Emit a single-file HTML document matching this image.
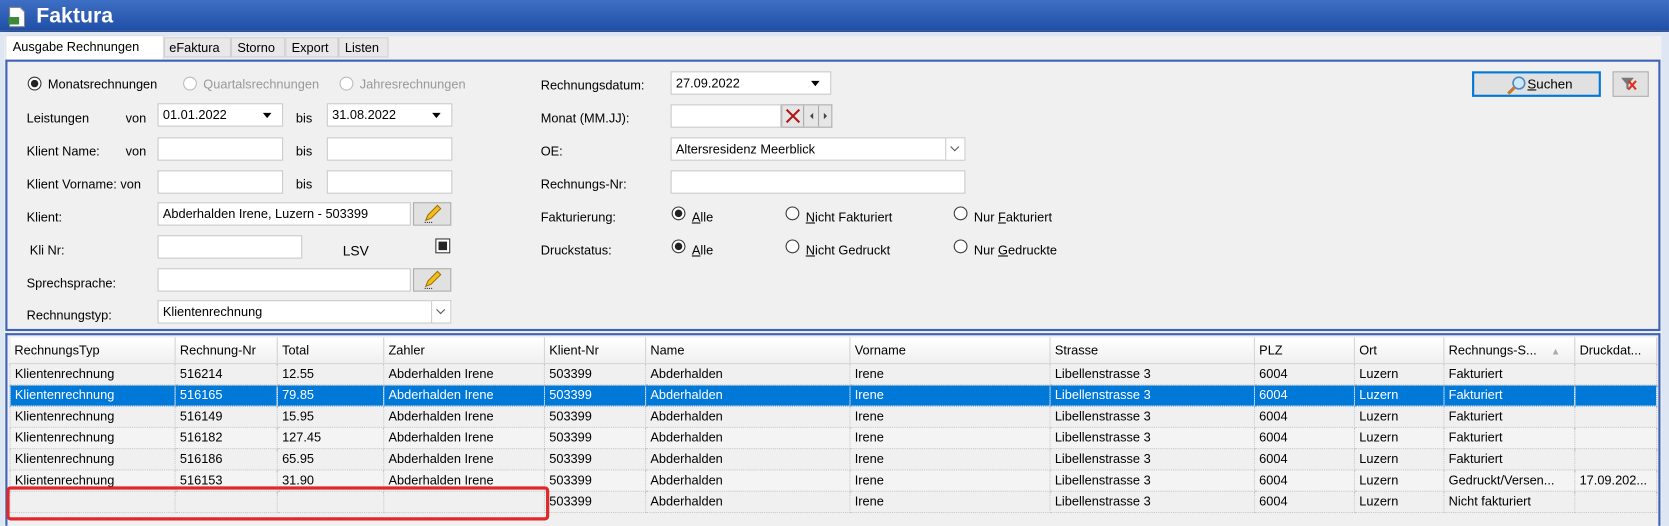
<!DOCTYPE html>
<html><head><meta charset="utf-8"><style>
*{box-sizing:border-box;margin:0;padding:0}
body{width:1669px;height:526px;overflow:hidden;background:#f0f0f0;font:12px "Liberation Sans",sans-serif;color:#000;position:relative}
#w{position:absolute;left:0;top:0;width:1568px;height:494px;transform:scale(1.0644);transform-origin:0 0}
.a{position:absolute;white-space:nowrap}
.tb{position:absolute;background:#fff;border:1px solid #c8c8c8;height:22px;padding:3px 4px;font-size:12px}
.dd::after{content:"";position:absolute;right:10px;top:8px;border-left:4px solid transparent;border-right:4px solid transparent;border-top:5px solid #000}
.rad{position:absolute;width:13px;height:13px;border:1px solid #333;border-radius:50%;background:#fff}
.rad.on::after{content:"";position:absolute;left:2px;top:2px;width:7px;height:7px;border-radius:50%;background:#222}
.rad.dis{border-color:#bbb}
.btn{position:absolute;background:#e1e1e1;border:1px solid #adadad}
.cb{position:absolute;width:18px;height:20px;border-left:1px solid #ccc;background:#fff}
.cb::after{content:"";position:absolute;left:5px;top:5px;width:5px;height:5px;border-right:1px solid #555;border-bottom:1px solid #555;transform:rotate(45deg)}
table{border-collapse:collapse;position:absolute;left:9px;top:317px;table-layout:fixed}
td,th{height:20px;padding:0 4px;font-weight:normal;text-align:left;font-size:12px;overflow:hidden;white-space:nowrap;border:1px dotted #c8c8c8}
th{height:24px;background:linear-gradient(#fff,#f0f0f0);border:none;border-right:1px solid #d5d5d5;border-bottom:1px solid #d5d5d5}
tr.sel td{background:#0078d7;color:#fff;border-color:#5a9ee0}
tr.g td{background:#f4f4f4}
u{text-decoration:underline}
</style></head><body><div id="w">
<div class="a" style="left:0;top:0;width:1568px;height:30px;background:linear-gradient(#3d6fc4,#1f4ea6);border-bottom:1px solid #16397d"></div>
<svg class="a" style="left:7px;top:6px" width="18" height="20"><path d="M2 1h10l4 4v14H2z" fill="#fff" stroke="#888"/><rect x="1" y="10" width="10" height="7" fill="#3a8a3a"/></svg>
<div class="a" style="left:34px;top:4px;color:#fff;font-weight:bold;font-size:20px">Faktura</div>
<div class="a" style="left:0;top:30px;width:1568px;height:4px;background:#dde6f3"></div>
<div class="a" style="left:5px;top:33px;width:149px;height:23px;background:#fff;border:1px solid #ddd;border-bottom:none;padding:3px 6px">Ausgabe Rechnungen</div>
<div class="a" style="left:154px;top:35px;width:63px;height:19px;background:#e8e8e8;border:1px solid #d0d0d0;padding:2px 4px">eFaktura</div>
<div class="a" style="left:217px;top:35px;width:51px;height:19px;background:#e8e8e8;border:1px solid #d0d0d0;padding:2px 5px">Storno</div>
<div class="a" style="left:268px;top:35px;width:50px;height:19px;background:#e8e8e8;border:1px solid #d0d0d0;padding:2px 5px">Export</div>
<div class="a" style="left:318px;top:35px;width:47px;height:19px;background:#e8e8e8;border:1px solid #d0d0d0;padding:2px 5px">Listen</div>
<div class="a" style="left:5px;top:56px;width:1555px;height:255px;border:2px solid #3f63b8;background:#f0f0f0"></div>
<div class="a" style="left:1561px;top:30px;width:7px;height:464px;background:#dde6f3"></div>
<div class="a" style="left:0;top:30px;width:4px;height:464px;background:#dde6f3"></div>

<div class="rad on" style="left:26px;top:72px"></div><div class="a" style="left:45px;top:72px">Monatsrechnungen</div>
<div class="rad dis" style="left:172px;top:72px"></div><div class="a" style="left:191px;top:72px;color:#999">Quartalsrechnungen</div>
<div class="rad dis" style="left:319px;top:72px"></div><div class="a" style="left:338px;top:72px;color:#999">Jahresrechnungen</div>

<div class="a" style="left:25px;top:104px">Leistungen</div><div class="a" style="left:118px;top:104px">von</div>
<div class="tb dd" style="left:148px;top:97px;width:118px">01.01.2022</div>
<div class="a" style="left:278px;top:104px">bis</div>
<div class="tb dd" style="left:307px;top:97px;width:118px">31.08.2022</div>
<div class="a" style="left:25px;top:135px">Klient Name:</div><div class="a" style="left:118px;top:135px">von</div>
<div class="tb" style="left:148px;top:129px;width:118px"></div><div class="a" style="left:278px;top:135px">bis</div>
<div class="tb" style="left:307px;top:129px;width:118px"></div>
<div class="a" style="left:25px;top:166px">Klient Vorname: von</div>
<div class="tb" style="left:148px;top:160px;width:118px"></div><div class="a" style="left:278px;top:166px">bis</div>
<div class="tb" style="left:307px;top:160px;width:118px"></div>
<div class="a" style="left:25px;top:197px">Klient:</div>
<div class="tb" style="left:148px;top:190px;width:238px">Abderhalden Irene, Luzern - 503399</div>
<div class="btn" style="left:388px;top:190px;width:36px;height:22px"><svg width="34" height="20"><path d="M11 16l2-5 9-9 3 3-9 9z" fill="#f0c020" stroke="#a07000"/><path d="M10 18h8" stroke="#333" stroke-dasharray="1 1"/></svg></div>
<div class="a" style="left:28px;top:228px">Kli Nr:</div>
<div class="tb" style="left:148px;top:221px;width:136px"></div>
<div class="a" style="left:322px;top:228px;font-size:13px">LSV</div>
<div class="a" style="left:409px;top:224px;width:14px;height:14px;border:1px solid #333;background:#fff"><div style="margin:2px;width:8px;height:8px;background:#222"></div></div>
<div class="a" style="left:25px;top:259px">Sprechsprache:</div>
<div class="tb" style="left:148px;top:252px;width:238px"></div>
<div class="btn" style="left:388px;top:252px;width:36px;height:22px"><svg width="34" height="20"><path d="M11 16l2-5 9-9 3 3-9 9z" fill="#f0c020" stroke="#a07000"/><path d="M10 18h8" stroke="#333" stroke-dasharray="1 1"/></svg></div>
<div class="a" style="left:25px;top:289px">Rechnungstyp:</div>
<div class="tb" style="left:148px;top:282px;width:276px">Klientenrechnung<div class="cb" style="right:0;top:0"></div></div>

<div class="a" style="left:508px;top:73px">Rechnungsdatum:</div>
<div class="tb dd" style="left:630px;top:67px;width:151px">27.09.2022</div>
<div class="a" style="left:508px;top:104px">Monat (MM.JJ):</div>
<div class="tb" style="left:630px;top:98px;width:104px"></div>
<div class="btn" style="left:734px;top:98px;width:48px;height:22px;background:#e6e6e6"><svg width="46" height="20"><path d="M4 4l12 12M16 4L4 16" stroke="#b01818" stroke-width="2"/><path d="M20 0v20M34 0v20" stroke="#aaa"/><path d="M29 7l-3 3 3 3z M39 7l3 3-3 3z" fill="#444"/></svg></div>
<div class="a" style="left:508px;top:135px">OE:</div>
<div class="tb" style="left:630px;top:129px;width:277px">Altersresidenz Meerblick<div class="cb" style="right:0;top:0"></div></div>
<div class="a" style="left:508px;top:166px">Rechnungs-Nr:</div>
<div class="tb" style="left:630px;top:160px;width:277px"></div>
<div class="a" style="left:508px;top:197px">Fakturierung:</div>
<div class="rad on" style="left:631px;top:194px"></div><div class="a" style="left:650px;top:197px"><u>A</u>lle</div>
<div class="rad" style="left:738px;top:194px"></div><div class="a" style="left:757px;top:197px"><u>N</u>icht Fakturiert</div>
<div class="rad" style="left:896px;top:194px"></div><div class="a" style="left:915px;top:197px">Nur <u>F</u>akturiert</div>
<div class="a" style="left:508px;top:228px">Druckstatus:</div>
<div class="rad on" style="left:631px;top:225px"></div><div class="a" style="left:650px;top:228px"><u>A</u>lle</div>
<div class="rad" style="left:738px;top:225px"></div><div class="a" style="left:757px;top:228px"><u>N</u>icht Gedruckt</div>
<div class="rad" style="left:896px;top:225px"></div><div class="a" style="left:915px;top:228px">Nur <u>G</u>edruckte</div>

<div class="btn" style="left:1383px;top:67px;width:121px;height:24px;border:2px solid #0078d7;padding:3px 0 0 50px;font-size:12.5px"><svg class="a" style="left:30px;top:1px" width="20" height="20"><circle cx="12" cy="8" r="5.5" fill="#cde8fb" stroke="#4a88c8" stroke-width="1.5"/><path d="M8 12l-6 6" stroke="#c87a30" stroke-width="3"/></svg><u>S</u>uchen</div>
<div class="btn" style="left:1515px;top:67px;width:34px;height:24px"><svg width="32" height="22"><path d="M7 5h12l-5 6v6l-2-2v-4z" fill="#777"/><path d="M14 8l7 8M21 8l-7 8" stroke="#e03020" stroke-width="2"/></svg></div>

<div class="a" style="left:5px;top:313px;width:1555px;height:181px;border:2px solid #3f63b8;border-bottom:none;background:#f0f0f0"></div>
<table style="width:1547px">
<colgroup><col style="width:155px"><col style="width:96px"><col style="width:100px"><col style="width:151px"><col style="width:95px"><col style="width:192px"><col style="width:188px"><col style="width:192px"><col style="width:94px"><col style="width:84px"><col style="width:123px"><col style="width:77px"></colgroup>
<tr><th>RechnungsTyp</th><th>Rechnung-Nr</th><th>Total</th><th>Zahler</th><th>Klient-Nr</th><th>Name</th><th>Vorname</th><th>Strasse</th><th>PLZ</th><th>Ort</th><th>Rechnungs-S... <span style="color:#aaa;font-size:9px;margin-left:10px">▲</span></th><th>Druckdat...</th></tr>
<tr><td>Klientenrechnung</td><td>516214</td><td>12.55</td><td>Abderhalden Irene</td><td>503399</td><td>Abderhalden</td><td>Irene</td><td>Libellenstrasse 3</td><td>6004</td><td>Luzern</td><td>Fakturiert</td><td></td></tr>
<tr class="sel"><td>Klientenrechnung</td><td>516165</td><td>79.85</td><td>Abderhalden Irene</td><td>503399</td><td>Abderhalden</td><td>Irene</td><td>Libellenstrasse 3</td><td>6004</td><td>Luzern</td><td>Fakturiert</td><td></td></tr>
<tr><td>Klientenrechnung</td><td>516149</td><td>15.95</td><td>Abderhalden Irene</td><td>503399</td><td>Abderhalden</td><td>Irene</td><td>Libellenstrasse 3</td><td>6004</td><td>Luzern</td><td>Fakturiert</td><td></td></tr>
<tr class="g"><td>Klientenrechnung</td><td>516182</td><td>127.45</td><td>Abderhalden Irene</td><td>503399</td><td>Abderhalden</td><td>Irene</td><td>Libellenstrasse 3</td><td>6004</td><td>Luzern</td><td>Fakturiert</td><td></td></tr>
<tr><td>Klientenrechnung</td><td>516186</td><td>65.95</td><td>Abderhalden Irene</td><td>503399</td><td>Abderhalden</td><td>Irene</td><td>Libellenstrasse 3</td><td>6004</td><td>Luzern</td><td>Fakturiert</td><td></td></tr>
<tr class="g"><td>Klientenrechnung</td><td>516153</td><td>31.90</td><td>Abderhalden Irene</td><td>503399</td><td>Abderhalden</td><td>Irene</td><td>Libellenstrasse 3</td><td>6004</td><td>Luzern</td><td>Gedruckt/Versen...</td><td>17.09.202...</td></tr>
<tr><td></td><td></td><td></td><td></td><td>503399</td><td>Abderhalden</td><td>Irene</td><td>Libellenstrasse 3</td><td>6004</td><td>Luzern</td><td>Nicht fakturiert</td><td></td></tr>
</table>
<div class="a" style="left:6px;top:457px;width:510px;height:32px;border:3px solid #e0282c;border-radius:4px"></div>
</div></body></html>
